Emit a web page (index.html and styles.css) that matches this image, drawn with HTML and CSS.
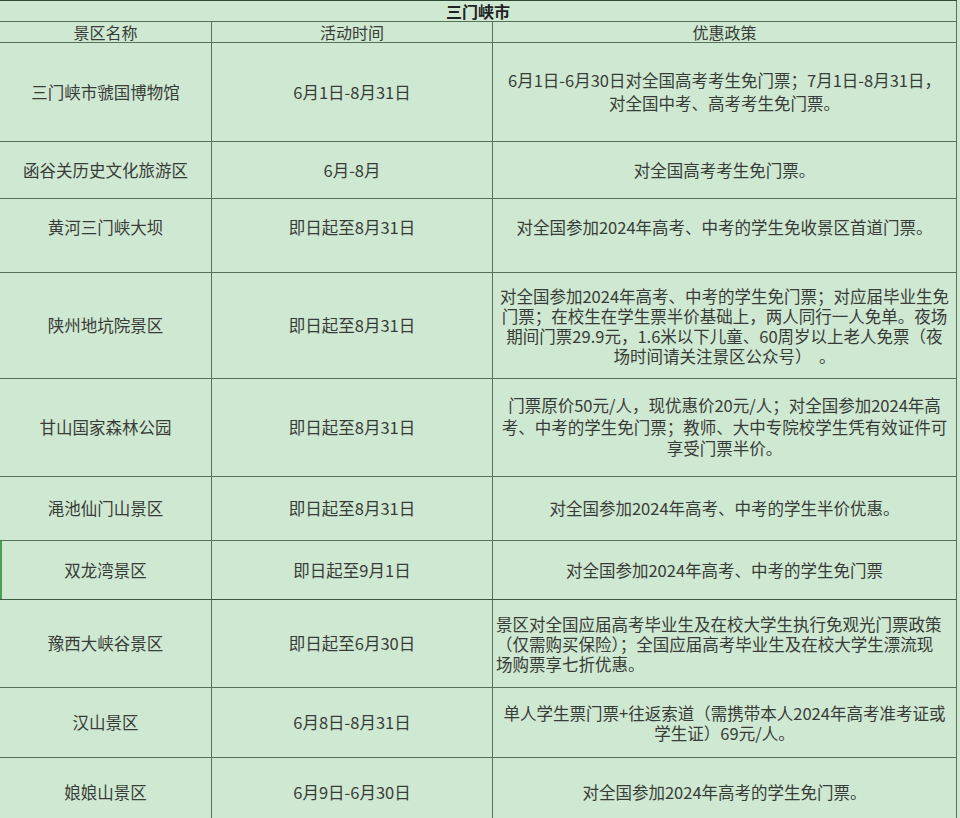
FILE: index.html
```html
<!DOCTYPE html>
<html lang="zh-CN">
<head>
<meta charset="utf-8">
<title>三门峡市</title>
<link rel="stylesheet" href="styles.css">
</head>
<body>
<div class="sheet">
  <div class="cell title">三门峡市</div>

  <div class="cell head">景区名称</div>
  <div class="cell head">活动时间</div>
  <div class="cell head">优惠政策</div>

  <div class="cell">三门峡市虢国博物馆</div>
  <div class="cell">6月1日-8月31日</div>
  <div class="cell policy lh23">6月1日-6月30日对全国高考考生免门票；7月1日-8月31日，<br>对全国中考、高考考生免门票。</div>

  <div class="cell">函谷关历史文化旅游区</div>
  <div class="cell">6月-8月</div>
  <div class="cell policy">对全国高考考生免门票。</div>

  <div class="cell up">黄河三门峡大坝</div>
  <div class="cell up">即日起至8月31日</div>
  <div class="cell policy up">对全国参加2024年高考、中考的学生免收景区首道门票。</div>

  <div class="cell">陕州地坑院景区</div>
  <div class="cell">即日起至8月31日</div>
  <div class="cell policy lh20">对全国参加2024年高考、中考的学生免门票；对应届毕业生免<br>门票；在校生在学生票半价基础上，两人同行一人免单。夜场<br>期间门票29.9元，1.6米以下儿童、60周岁以上老人免票（夜<br>场时间请关注景区公众号）&nbsp;&nbsp;。</div>

  <div class="cell">甘山国家森林公园</div>
  <div class="cell">即日起至8月31日</div>
  <div class="cell policy lh22">门票原价50元/人，现优惠价20元/人；对全国参加2024年高<br>考、中考的学生免门票；教师、大中专院校学生凭有效证件可<br>享受门票半价。</div>

  <div class="cell">渑池仙门山景区</div>
  <div class="cell">即日起至8月31日</div>
  <div class="cell policy">对全国参加2024年高考、中考的学生半价优惠。</div>

  <div class="cell sel-first">双龙湾景区</div>
  <div class="cell sel">即日起至9月1日</div>
  <div class="cell policy sel">对全国参加2024年高考、中考的学生免门票</div>

  <div class="cell">豫西大峡谷景区</div>
  <div class="cell">即日起至6月30日</div>
  <div class="cell policy left lh20">景区对全国应届高考毕业生及在校大学生执行免观光门票政策<br>（仅需购买保险）；全国应届高考毕业生及在校大学生漂流现<br>场购票享七折优惠。</div>

  <div class="cell">汉山景区</div>
  <div class="cell">6月8日-8月31日</div>
  <div class="cell policy lh20">单人学生票门票+往返索道（需携带本人2024年高考准考证或<br>学生证）69元/人。</div>

  <div class="cell">娘娘山景区</div>
  <div class="cell">6月9日-6月30日</div>
  <div class="cell policy">对全国参加2024年高考的学生免门票。</div>
</div>
</body>
</html>
```

FILE: styles.css
```css
html, body {
  margin: 0;
  padding: 0;
  background: #cfe8d1;
}

body {
  width: 960px;
  height: 818px;
  overflow: hidden;
  font-family: "Noto Sans CJK SC", "Noto Sans", sans-serif;
  color: #383c38;
}

.sheet {
  display: grid;
  grid-template-columns: 212px 281px 464px;
  grid-template-rows: 21px 21px 99px 57px 74px 106px 98px 64px 59px 88px 70px 70px;
  border-top: 1px solid #2f4c35;
  width: 957px;
  box-sizing: border-box;
}

.cell {
  box-sizing: border-box;
  display: flex;
  align-items: center;
  justify-content: center;
  text-align: center;
  border-right: 1px solid #557259;
  border-bottom: 1px solid #557259;
  font-size: 16.5px;
  line-height: 21px;
  white-space: nowrap;
  padding: 0 2px;
}

.title {
  grid-column: 1 / 4;
  font-weight: bold;
  font-size: 16px;
  line-height: 18px;
  color: #222;
  padding-bottom: 1px;
}

.head {
  font-size: 16px;
  line-height: 18px;
}

.policy {
  letter-spacing: 0;
}

.up {
  padding-bottom: 16px;
}

.left {
  justify-content: flex-start;
  text-align: left;
  padding-left: 3px;
}

.lh20 { line-height: 20px; }
.lh22 { line-height: 21.7px; }
.lh23 { line-height: 23px; }

.sel,
.sel-first {
  border-bottom-color: #3c5a41;
}

.sel-first {
  box-shadow: inset 2px 0 0 #4aa04e;
}
```
